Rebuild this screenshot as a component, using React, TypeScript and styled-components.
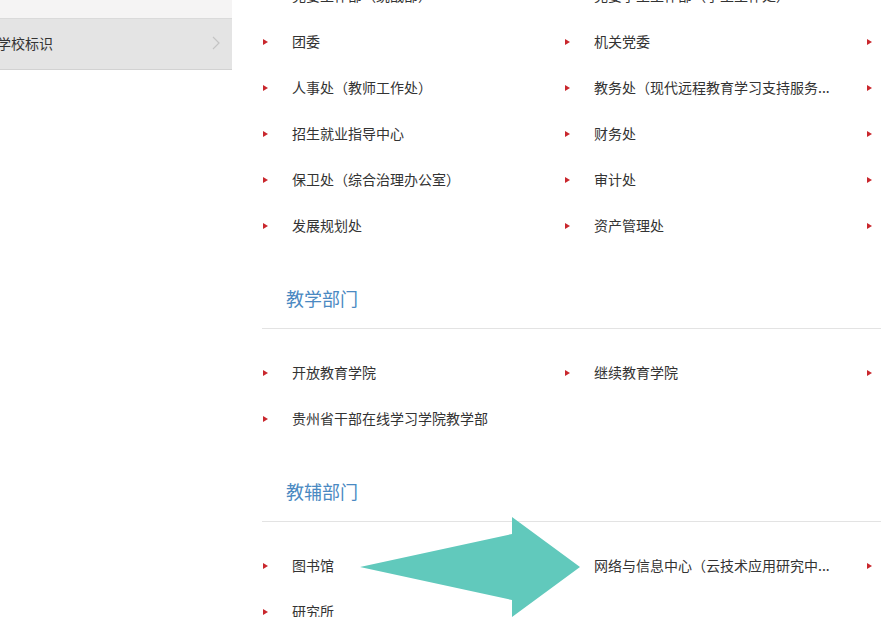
import React from 'react';
import styled, { createGlobalStyle } from 'styled-components';

const GlobalStyle = createGlobalStyle`
  html, body {
    margin: 0;
    padding: 0;
    background: #fff;
    overflow: hidden;
    font-family: "Noto Sans CJK SC", "Microsoft YaHei", "Liberation Sans", sans-serif;
  }
`;

const Page = styled.div`
  position: relative;
  display: flex;
  align-items: flex-start;
  width: 881px;
  height: 617px;
  overflow: hidden;
`;

const Sidebar = styled.ul`
  list-style: none;
  margin: -42px 0 0;
  padding: 0;
  width: 232px;
  flex-shrink: 0;
`;

const SideItem = styled.li<{ $active?: boolean }>`
  display: flex;
  align-items: center;
  justify-content: space-between;
  height: 48px;
  padding: 0 12px 2px 0;
  background: ${(p) => (p.$active ? '#e4e4e4' : '#f5f4f4')};
  border-bottom: 1px solid ${(p) => (p.$active ? '#d2d2d2' : '#dadada')};
  font-size: 14px;
  color: #333;

  &:first-child {
    height: 58px;
  }

  span {
    margin-left: -3px;
  }
`;

const Chevron = styled.svg`
  width: 8px;
  height: 14px;
  flex-shrink: 0;
`;

const Main = styled.div`
  margin: -28px 0 0 30px;
  width: 906px;
  flex-shrink: 0;
`;

const Grid = styled.ul`
  list-style: none;
  margin: 0;
  padding: 0;
  display: grid;
  grid-template-columns: repeat(3, 302px);
  grid-auto-rows: 46px;
`;

const Item = styled.li`
  display: flex;
  align-items: center;
  font-size: 14px;
  color: #333;
  white-space: nowrap;
`;

const Bullet = styled.i`
  display: block;
  width: 0;
  height: 0;
  margin: 1px 24px 0 1px;
  border-top: 3.5px solid transparent;
  border-bottom: 3.5px solid transparent;
  border-left: 5px solid #c9272d;
`;

const Heading = styled.h3`
  margin: 31px 0 0;
  padding: 0 0 11px 24px;
  height: 38px;
  line-height: 38px;
  font-size: 18px;
  font-weight: normal;
  color: #4a89c2;
  border-bottom: 1px solid #e3e3e3;
`;

const SectionBody = styled.div<{ $first?: boolean }>`
  padding-top: ${(p) => (p.$first ? 0 : 20)}px;
`;

const Arrow = styled.svg`
  position: absolute;
  left: 360px;
  top: 517px;
  width: 221px;
  height: 101px;
`;

type Section = { title?: string; items: string[] };

const sections: Section[] = [
  {
    items: [
      '党委工作部（统战部）',
      '党委学生工作部（学生工作处）',
      '党委宣传部',
      '团委',
      '机关党委',
      '校长办公室',
      '人事处（教师工作处）',
      '教务处（现代远程教育学习支持服务...',
      '科研处',
      '招生就业指导中心',
      '财务处',
      '国际交流合作处',
      '保卫处（综合治理办公室）',
      '审计处',
      '后勤管理处',
      '发展规划处',
      '资产管理处',
      '质量评估办公室',
    ],
  },
  {
    title: '教学部门',
    items: ['开放教育学院', '继续教育学院', '职业技术学院', '贵州省干部在线学习学院教学部'],
  },
  {
    title: '教辅部门',
    items: ['图书馆', '网络与信息中心（云技术应用研究中...', '教学资源中心', '研究所'],
  },
];

const App = (): JSX.Element => {
  return (
    <>
      <GlobalStyle />
      <Page>
        <Sidebar>
          <SideItem>
            <span>学校概况</span>
          </SideItem>
          <SideItem $active>
            <span>学校标识</span>
            <Chevron viewBox="0 0 8 14">
              <path d="M1 1 L7 7 L1 13" fill="none" stroke="#c4c4c4" strokeWidth="1.2" />
            </Chevron>
          </SideItem>
        </Sidebar>
        <Main>
          {sections.map((s, i) => (
            <div key={i}>
              {s.title && <Heading>{s.title}</Heading>}
              <SectionBody $first={!s.title}>
                <Grid>
                  {s.items.map((name) => (
                    <Item key={name}>
                      <Bullet />
                      {name}
                    </Item>
                  ))}
                </Grid>
              </SectionBody>
            </div>
          ))}
        </Main>
        <Arrow viewBox="0 0 221 101">
          <polygon points="0,50 152,17 152,0 220,50 152,100 152,83" fill="#61c9bc" />
        </Arrow>
      </Page>
    </>
  );
};

export default App;
